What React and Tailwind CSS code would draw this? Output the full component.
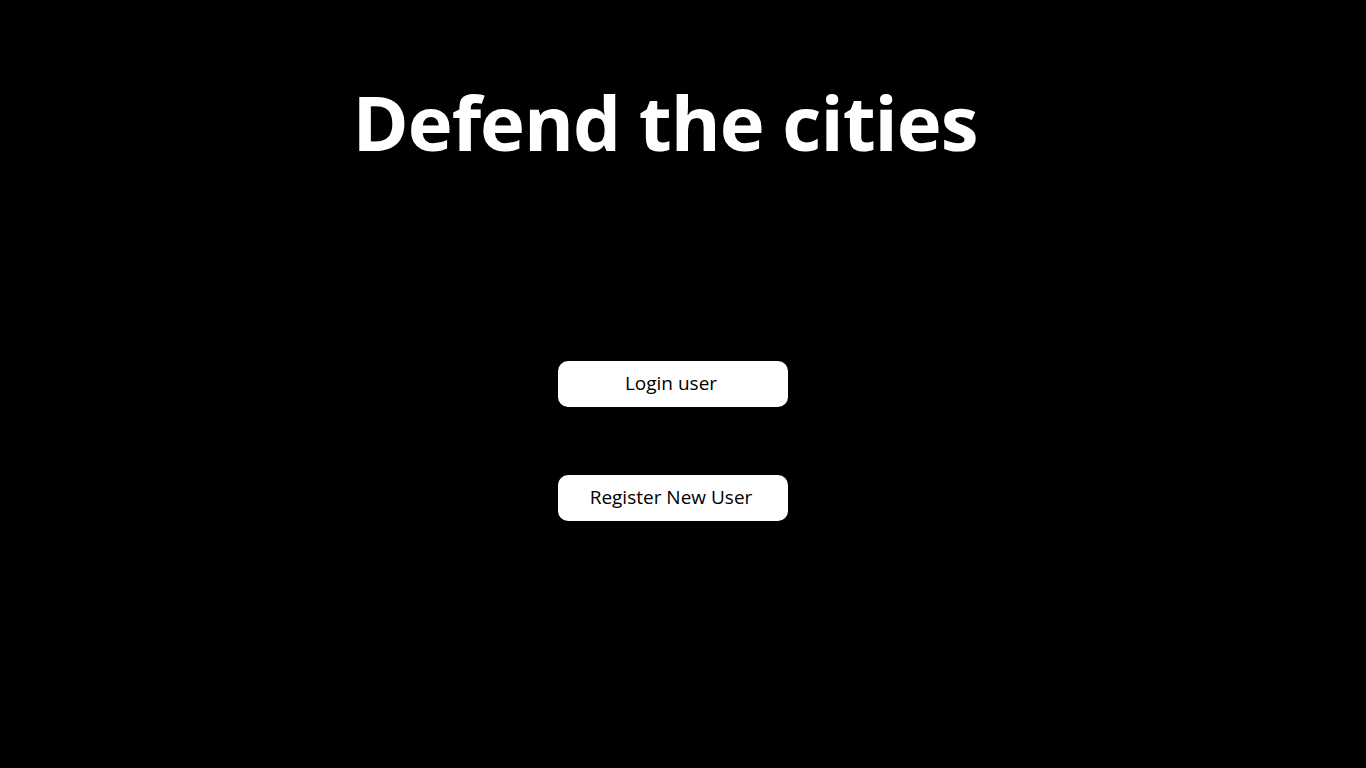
export default function App() {
  return (
    <div className="h-[768px] w-[1366px] bg-black font-['Open_Sans',sans-serif]">
      <div className="flex flex-col items-center pt-[76px] pr-[36px]">
        <h1 className="text-[76px] font-bold leading-[1.2] tracking-[-1px] text-white">Defend the cities</h1>
      </div>
      <div className="mt-[194px] flex flex-col items-center gap-[68px]">
        <button className="ml-[-20px] h-[46px] w-[230px] rounded-[10px] bg-white pr-[4px] pb-[1px] text-[19px] text-black">
          Login user
        </button>
        <button className="ml-[-20px] h-[46px] w-[230px] rounded-[10px] bg-white pr-[4px] pb-[1px] text-[19px] text-black">
          Register New User
        </button>
      </div>
    </div>
  );
}
